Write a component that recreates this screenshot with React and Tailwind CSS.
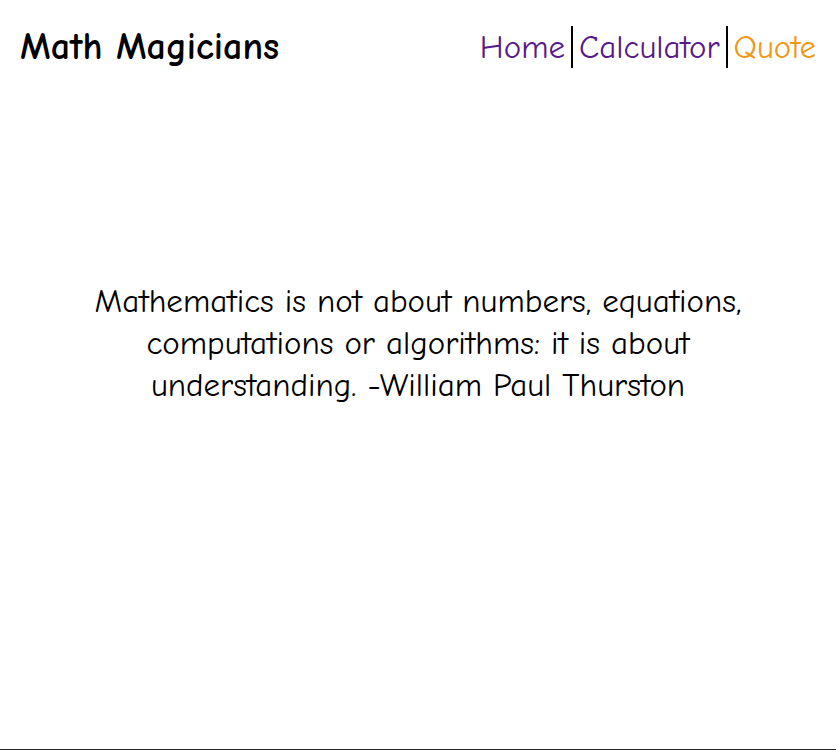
const links = [
  { label: "Home", href: "#home", style: "border-r-2 border-black pr-1.5 text-[#551a8b]" },
  { label: "Calculator", href: "#calculator", style: "border-r-2 border-black px-1.5 text-[#551a8b]" },
  { label: "Quote", href: "#quote", style: "pl-1.5 text-[#ef9819]" },
];

export default function App() {
  return (
    <div className="flex min-h-screen flex-col border-b border-[#252525] bg-white font-['Comic_Sans_MS','Comic_Neue','Lato',sans-serif] text-black">
      <header className="flex items-start justify-between px-5 pt-[26px]">
        <h1 className="text-[38px] leading-[42px] font-bold">Math Magicians</h1>
        <nav className="flex text-[33px] leading-[42px]">
          {links.map((link) => (
            <a key={link.label} href={link.href} className={link.style}>
              {link.label}
            </a>
          ))}
        </nav>
      </header>
      <main className="mx-auto mt-[212px] w-full max-w-[740px] px-4 text-center text-[33px] leading-[42px]">
        <p>
          Mathematics is not about numbers, equations, computations or algorithms: it is about
          understanding. -William Paul Thurston
        </p>
      </main>
    </div>
  );
}
